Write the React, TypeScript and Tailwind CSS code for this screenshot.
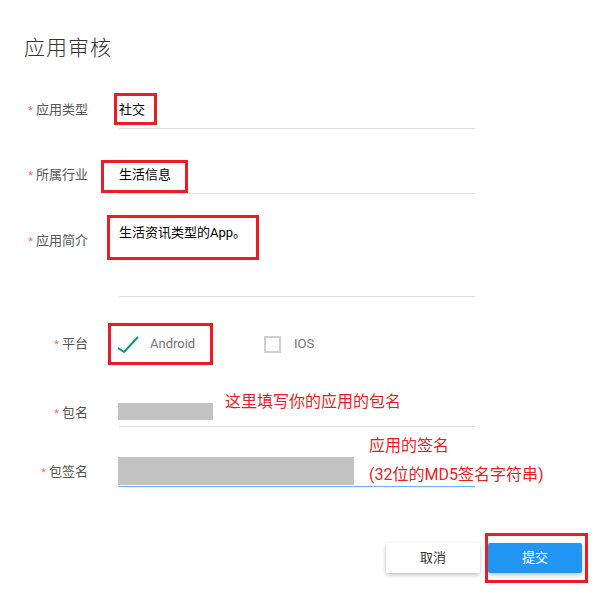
import React from 'react'

const font = { fontFamily: 'Roboto, "Noto Sans CJK SC", sans-serif' }

function Label({ text }: { text: string }) {
  return (
    <div className="w-[88px] shrink-0 text-right text-[13px] leading-[20px] text-[#555]">
      <span className="mr-[3px] text-[11px] text-[#f36b6b]">*</span>
      {text}
    </div>
  )
}

function Mark({ className }: { className: string }) {
  return <div className={`pointer-events-none absolute border-[3px] border-[#ed1c24] ${className}`} />
}

export default function App() {
  return (
    <div className="relative h-[615px] w-[593px] overflow-hidden bg-white" style={font}>
      <h1 className="pl-[24px] pt-[36px] text-[21px] font-light leading-[24px] tracking-[1px] text-[#333]">应用审核</h1>

      <div className="mt-[32px] flex items-center">
        <Label text="应用类型" />
        <div className="relative ml-[31px] flex h-[37px] w-[356px] items-center border-b border-[#e0e0e0] text-[13px] text-black">
          社交
          <Mark className="left-[-5px] top-[1px] h-[32px] w-[43px]" />
        </div>
      </div>

      <div className="mt-[28px] flex items-center">
        <Label text="所属行业" />
        <div className="relative ml-[31px] flex h-[37px] w-[356px] items-center border-b border-[#e0e0e0] text-[13px] text-black">
          生活信息
          <Mark className="left-[-18px] top-[3px] h-[33px] w-[87px]" />
        </div>
      </div>

      <div className="mt-[27px] flex items-start">
        <div className="mt-[10px]">
          <Label text="应用简介" />
        </div>
        <div className="relative ml-[31px] h-[76px] w-[356px] border-b border-[#e0e0e0] text-[13px] leading-[24px] text-black">
          生活资讯类型的App。
          <Mark className="left-[-12px] top-[-6px] h-[45px] w-[152px]" />
        </div>
      </div>

      <div className="mt-[26px] flex h-[42px] items-center">
        <Label text="平台" />
        <div className="relative ml-[31px] flex h-[42px] w-[356px] items-center text-[13px] text-[#757575]">
          <svg className="-ml-[3px]" width="24" height="20" viewBox="0 0 24 20" fill="none">
            <path d="M2 14 L8 18 L22 3" stroke="#009688" strokeWidth="2" />
          </svg>
          <span className="ml-[10px] w-[114px]">Android</span>
          <span className="h-[17px] w-[17px] border-2 border-[#d0d0d0]" />
          <span className="ml-[13px]">IOS</span>
          <Mark className="left-[-11px] top-0 h-[42px] w-[105px]" />
        </div>
      </div>

      <div className="mt-[35px] flex items-center">
        <Label text="包名" />
        <div className="relative ml-[31px] h-[27px] w-[356px] border-b border-[#e0e0e0]">
          <div className="ml-[-1px] mt-[3px] h-[17px] w-[95px] bg-[#c3c3c3]" />
          <div className="absolute left-[106px] top-[-8px] whitespace-nowrap text-[16px] leading-[20px] text-[#ed1c24]">
            这里填写你的应用的包名
          </div>
        </div>
      </div>

      <div className="mt-[30px] flex items-center">
        <Label text="包签名" />
        <div className="relative ml-[31px] h-[30px] w-[356px] border-b border-[#64b5f6]">
          <div className="ml-[-1px] h-[28px] w-[236px] bg-[#c3c3c3]" />
          <div className="absolute left-[250px] top-[-26px] whitespace-nowrap text-[16px] leading-[29px] text-[#ed1c24]">
            应用的签名
            <br />
            (32位的MD5签名字符串)
          </div>
        </div>
      </div>

      <div className="mt-[56px] flex justify-end gap-[8px] pr-[11px]">
        <button className="h-[30px] w-[94px] rounded-[2px] bg-white text-[13px] text-[#333] shadow-[0_2px_4px_rgba(0,0,0,0.25)]">
          取消
        </button>
        <button className="relative h-[30px] w-[94px] rounded-[2px] bg-[#2196f3] text-[13px] text-white shadow-[0_2px_4px_rgba(0,0,0,0.25)]">
          提交
          <Mark className="left-[-3px] top-[-10px] h-[50px] w-[103px]" />
        </button>
      </div>
    </div>
  )
}
